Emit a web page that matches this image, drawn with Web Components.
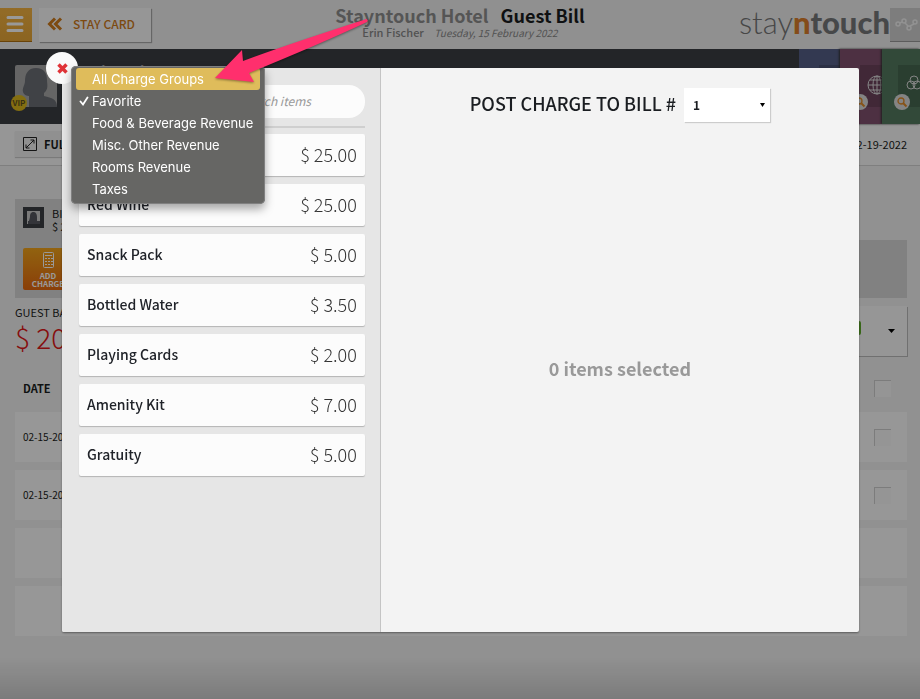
<!DOCTYPE html>
<html lang="en">
<head>
<meta charset="utf-8">
<title>Guest Bill</title>
<style>
    body {
        margin: 0;
        min-height: 100vh;
        overflow: hidden;
        background: #f2f2f2;
        color: #1a1d21;
        font-family: "Noto Sans CJK SC", "Noto Sans", sans-serif;
        font-size: 11px;
        line-height: 16px;
    }
</style>
</head>
<body>
<app-header hotel="Stayntouch Hotel" heading="Guest Bill" user="Erin Fischer" date="Tuesday, 15 February 2022"></app-header>
<guest-banner name="Erin Fischer"></guest-banner>
<guest-bill departure="02-19-2022"></guest-bill>
<charge-modal>
    <charge-item price="25.00"></charge-item>
    <charge-item price="25.00">Red Wine</charge-item>
    <charge-item price="5.00">Snack Pack</charge-item>
    <charge-item price="3.50">Bottled Water</charge-item>
    <charge-item price="2.00">Playing Cards</charge-item>
    <charge-item price="7.00">Amenity Kit</charge-item>
    <charge-item price="5.00">Gratuity</charge-item>
    <group-menu slot="menu"></group-menu>
</charge-modal>
<callout-arrow></callout-arrow>

<script>
class AppHeader extends HTMLElement {
    constructor() {
        super();
        this.attachShadow({ mode: 'open' });
    }

    connectedCallback() {
        this.shadowRoot.innerHTML = `
            <style>
                :host {
                    display: grid;
                    grid-template-columns: 1fr auto 1fr;
                    height: 49px;
                    background: #f0f0f0;
                }
                .left, .right {
                    display: flex;
                    align-items: center;
                }
                .left { gap: 7px; }
                .right { justify-content: flex-end; }
                button, a {
                    box-sizing: border-box;
                    height: 34px;
                    border: 0;
                    font: inherit;
                }
                .menu {
                    width: 32px;
                    padding: 0 0 0 6px;
                    background: linear-gradient(#f5b443, #e8a737);
                    border-bottom: 1px solid #b07010;
                }
                .back {
                    display: flex;
                    align-items: center;
                    gap: 10px;
                    padding: 0 16px 2px 8px;
                    background: #fafafa;
                    box-shadow: 1px 1px 1px #aaa;
                    color: #d07c1c;
                    font-size: 12px;
                    font-weight: 500;
                    text-decoration: none;
                }
                svg { display: block; }
                .title {
                    text-align: center;
                    padding-top: 5px;
                }
                h1 {
                    margin: 0;
                    font-size: 18px;
                    line-height: 20px;
                    font-weight: 700;
                }
                h1 span { color: #8e8e8e; margin-right: 8px; }
                p { margin: 0; line-height: 14px; color: #888; }
                p b { margin-right: 8px; font-weight: 500; }
                p em { font-size: 10px; }
                .logo {
                    padding-bottom: 6px;
                    font-family: Lato, sans-serif;
                    font-size: 31px;
                    line-height: 36px;
                    font-weight: 300;
                    color: #777;
                }
                .logo b { font-weight: 900; color: #77787a; }
                .logo i { font-style: normal; font-weight: 900; color: #dd7f2c; }
                .stats {
                    width: 30px;
                    padding: 0 0 0 5px;
                    overflow: hidden;
                    background: #d0d0d0;
                    border-bottom: 1px solid #999;
                }
            </style>
            <div class="left">
                <button class="menu" aria-label="Menu">
                    <svg width="18" height="18" viewBox="0 0 18 18" stroke="#fff" stroke-width="3" stroke-linecap="round"><path d="M2 2.500h14M2 9h14M2 15.500h14"/></svg>
                </button>
                <a class="back" href="#staycard">
                    <svg width="16" height="14" viewBox="0 0 16 14" fill="none" stroke="#d07c1c" stroke-width="3"><path d="M8 1.500L2.500 7L8 12.500M14 1.500L8.500 7L14 12.500"/></svg>
                    STAY CARD
                </a>
            </div>
            <div class="title">
                <h1><span>${this.getAttribute('hotel')}</span> ${this.getAttribute('heading')}</h1>
                <p><b>${this.getAttribute('user')}</b> <em>${this.getAttribute('date')}</em></p>
            </div>
            <div class="right">
                <div class="logo">stay<i>n</i><b>touch</b></div>
                <button class="stats" aria-label="Statistics">
                    <svg width="26" height="18" viewBox="0 0 26 18" fill="none" stroke="#f4f4f4" stroke-width="1.500"><circle cx="3" cy="9" r="2"/><circle cx="9" cy="6" r="2"/><circle cx="14" cy="13" r="2"/><circle cx="20" cy="7" r="2"/><path d="M5 8L7 7M10 8L13 11M15 11L19 9"/></svg>
                </button>
            </div>
        `;
    }
}

class GuestBanner extends HTMLElement {
    constructor() {
        super();
        this.attachShadow({ mode: 'open' });
    }

    connectedCallback() {
        const glass = '<svg class="glass" width="16" height="16" viewBox="0 0 16 16" fill="none"><circle cx="8" cy="8" r="8" fill="#ddd"/><circle cx="7" cy="7" r="3" stroke="#e08a28" stroke-width="1.300"/><path d="M9.300 9.300L12.500 12.500" stroke="#e08a28" stroke-width="2"/></svg>';
        this.shadowRoot.innerHTML = `
            <style>
                :host {
                    display: flex;
                    height: 75px;
                    background: #3b3e44;
                }
                .photo {
                    position: relative;
                    margin: 16px 0 0 15px;
                    width: 42px;
                    height: 42px;
                    background: #a8a8a8;
                    border-radius: 2px;
                }
                .vip {
                    position: absolute;
                    left: -4px;
                    bottom: -4px;
                    width: 16px;
                    height: 16px;
                    border-radius: 50%;
                    background: #dcb81c;
                    color: #5f5320;
                    text-align: center;
                    font-size: 8px;
                    line-height: 15px;
                    font-weight: 700;
                }
                h2 {
                    flex: 1;
                    margin: 11px 0 0 20px;
                    color: #fff;
                    font-size: 22px;
                    line-height: 28px;
                }
                .tile {
                    position: relative;
                    box-sizing: border-box;
                    width: 41px;
                    height: 75px;
                    padding: 16px 0 0 20px;
                    overflow: hidden;
                }
                .tile div {
                    height: 42px;
                    background: rgba(0, 0, 0, .15);
                }
                .tile .icon { display: block; padding-top: 10px; margin-left: 7px; }
                .tile .glass { position: absolute; left: 12px; top: 45px; }
                .blue { background: #565f87; }
                .purple { width: 42px; background: #81506e; box-shadow: -1px 0 2px #333; }
                .green { width: 38px; padding-left: 16px; background: #547b60; box-shadow: -1px 0 2px #333; }
            </style>
            <div class="photo">
                <svg width="42" height="42" viewBox="0 0 42 42" fill="#6c6f76"><path d="M21 3C13 3 10 9 10 16C10 20 7 23 8 27C9 31 14 31 14 31V42H42C42 34 37 33 29 31V28C34 24 32 19 32 15C32 8 29 3 21 3Z"/></svg>
                <span class="vip">VIP</span>
            </div>
            <h2>${this.getAttribute('name')}</h2>
            <div class="tile blue"><div></div></div>
            <div class="tile purple">
                <div><svg class="icon" width="20" height="20" viewBox="0 0 20 20" fill="none" stroke="#ddd" stroke-width="1"><circle cx="10" cy="10" r="9"/><ellipse cx="10" cy="10" rx="4" ry="9"/><path d="M10 1v18M1 10h18M3 5h14M3 15h14"/></svg></div>
                ${glass}
            </div>
            <div class="tile green">
                <div><svg class="icon" width="20" height="20" viewBox="0 0 20 20" fill="none" stroke="#ddd" stroke-width="1"><circle cx="9" cy="5" r="4"/><circle cx="6" cy="10" r="4"/><circle cx="12" cy="10" r="4"/></svg></div>
                ${glass}
            </div>
        `;
    }
}

class GuestBill extends HTMLElement {
    constructor() {
        super();
        this.attachShadow({ mode: 'open' });
    }

    connectedCallback() {
        const row = (date, box) => `<tr><td>${date}</td><td>${box ? '<input type="checkbox" aria-label="Select charge">' : ''}</td></tr>`;
        this.shadowRoot.innerHTML = `
            <style>
                :host { display: block; }
                .bar {
                    display: flex;
                    align-items: center;
                    justify-content: space-between;
                    height: 39px;
                    padding: 0 13px 2px 15px;
                    background: #fafafa;
                    border-bottom: 1px solid #d4d4d4;
                }
                button { border: 0; font: inherit; color: inherit; }
                .full {
                    display: flex;
                    align-items: center;
                    gap: 7px;
                    height: 26px;
                    padding: 0 8px;
                    background: #f0f0f0;
                    box-shadow: 0 1px 1px #ccc;
                    font-weight: 700;
                }
                .page { padding: 33px 13px 0 15px; }
                .tab {
                    box-sizing: border-box;
                    display: flex;
                    gap: 8px;
                    width: 160px;
                    height: 41px;
                    padding: 8px;
                    background: #d8d8d8;
                    line-height: 13px;
                }
                .tab svg { background: #3b3e44; }
                .bill {
                    height: 50px;
                    padding: 8px 8px 0;
                    background: #d8d8d8;
                }
                .add {
                    display: flex;
                    flex-direction: column;
                    align-items: center;
                    width: 50px;
                    height: 42px;
                    padding: 4px 0 0;
                    border-radius: 2px;
                    background: linear-gradient(#f3a51b, #e6690f);
                    color: #fff;
                    font-size: 8px;
                    line-height: 8px;
                    font-weight: 700;
                }
                .add svg { display: block; margin-bottom: 4px; }
                .summary {
                    display: flex;
                    justify-content: space-between;
                    height: 50px;
                    margin-top: 8px;
                    line-height: 13px;
                }
                .total {
                    display: block;
                    font-size: 28px;
                    line-height: 36px;
                    font-weight: 300;
                    color: #e01818;
                }
                .pay {
                    display: flex;
                    align-items: center;
                    justify-content: space-between;
                    width: 150px;
                    padding: 0 12px 0 90px;
                    background: #fafafa;
                    box-shadow: 1px 1px 0 #bbb;
                    box-sizing: border-box;
                }
                .pay i {
                    width: 14px;
                    height: 14px;
                    margin-bottom: 6px;
                    border-radius: 2px;
                    background: #5fae2a;
                }
                table {
                    width: 100%;
                    border-spacing: 0 8px;
                    margin-bottom: -8px;
                }
                th, td { height: 50px; padding: 0 8px; text-align: left; }
                th { height: 32px; padding-top: 8px; }
                td { background: #fcfcfc; font-size: 10px; }
                th:last-child, td:last-child { width: 17px; padding-right: 16px; }
                input {
                    appearance: none;
                    display: block;
                    width: 17px;
                    height: 17px;
                    margin: 0;
                    background: #f8f8f8;
                    border: solid #cfcfcf;
                    border-width: 1px 0 0 1px;
                }
            </style>
            <div class="bar">
                <button class="full">
                    <svg width="14" height="14" viewBox="0 0 14 14" fill="none" stroke="#222"><path d="M.5.5h13v13H.5zM3 11L11 3M7.500 3H11v3.500M3 7.500V11h3.500"/></svg>
                    FULL
                </button>
                <span>${this.getAttribute('departure')}</span>
            </div>
            <div class="page">
                <div class="tab">
                    <svg width="21" height="21" viewBox="0 0 21 21"><path fill="#ccc" d="M4 4h13v13H4z"/><path fill="#55585f" d="M10.500 5C7.500 5 7 7.500 7 10L6 14H5V17H17V14H14V10C14 7 13 5 10.500 5Z"/></svg>
                    <span>BILL<br>$ 200</span>
                </div>
                <div class="bill">
                    <button class="add">
                        <svg width="11" height="16" viewBox="0 0 11 16" fill="none" stroke="#fff"><rect x=".5" y=".5" width="10" height="15" rx="1"/><path d="M2 3.500h7"/><path stroke-dasharray="2 1" d="M2 6.500h8M2 9.500h8M2 12.500h8"/></svg>
                        <span>ADD<br>CHARGE</span>
                    </button>
                </div>
                <div class="summary">
                    <div>GUEST BALANCE<span class="total">$ 200</span></div>
                    <div class="pay"><i></i><svg width="7" height="4" viewBox="0 0 7 4"><path d="M0 0h7L3.500 4z"/></svg></div>
                </div>
                <table>
                    <thead><tr><th>DATE</th><th><input type="checkbox" aria-label="Select all"></th></tr></thead>
                    <tbody>${row('02-15-2022', true)}${row('02-15-2022', true)}${row('')}${row('')}</tbody>
                </table>
            </div>
        `;
    }
}

class ChargeItem extends HTMLElement {
    constructor() {
        super();
        this.attachShadow({ mode: 'open' });
    }

    connectedCallback() {
        this.shadowRoot.innerHTML = `
            <style>
                :host { display: block; }
                button {
                    display: flex;
                    align-items: center;
                    width: 100%;
                    height: 42px;
                    padding: 0 8px 2px;
                    border: 0;
                    border-radius: 2px;
                    background: #fcfcfc;
                    box-shadow: 0 1px 1px #b4b4b4;
                    color: #202329;
                    font: inherit;
                    font-size: 14px;
                    font-weight: 500;
                    line-height: 20px;
                }
                .price {
                    margin-left: auto;
                    font-size: 18px;
                    font-weight: 300;
                    color: #333;
                }
            </style>
            <button><slot></slot><span class="price">$ ${this.getAttribute('price')}</span></button>
        `;
    }
}

class GroupMenu extends HTMLElement {
    constructor() {
        super();
        this.attachShadow({ mode: 'open' });
    }

    connectedCallback() {
        const groups = ['All Charge Groups', 'Favorite', 'Food & Beverage Revenue', 'Misc. Other Revenue', 'Rooms Revenue', 'Taxes'];
        this.shadowRoot.innerHTML = `
            <style>
                :host {
                    display: block;
                    box-sizing: border-box;
                    width: 194px;
                    padding: 2px 5px 4px;
                    border-radius: 5px;
                    background: #666664;
                    box-shadow: inset 0 0 0 1px #808080, 0 5px 10px rgba(0, 0, 0, .35);
                    font-family: Inter, sans-serif;
                    font-size: 13px;
                }
                button {
                    display: flex;
                    align-items: center;
                    gap: 3px;
                    width: 100%;
                    height: 22px;
                    padding: 0 0 0 3px;
                    border: 0;
                    border-radius: 3px;
                    background: none;
                    color: #fff;
                    font: inherit;
                    line-height: 22px;
                    white-space: nowrap;
                }
                .active { background: #dfbc5b; }
            </style>
            ${groups.map((group, i) => `
                <button role="menuitemradio" aria-checked="${i === 1}" class="${i === 0 ? 'active' : ''}">
                    <svg width="10" height="10" viewBox="0 0 10 10" fill="none" stroke="#fff" stroke-width="1.800" stroke-linecap="round">${i === 1 ? '<path d="M1.500 5.500L4 8.500L8.500 1.500"/>' : ''}</svg>
                    ${group.replace('&', '&amp;')}
                </button>`).join('')}
        `;
    }
}

class ChargeModal extends HTMLElement {
    constructor() {
        super();
        this.attachShadow({ mode: 'open' });
    }

    connectedCallback() {
        this.shadowRoot.innerHTML = `
            <style>
                :host {
                    position: fixed;
                    inset: 0;
                    display: grid;
                    box-sizing: border-box;
                    padding: 68px 61px 67px 62px;
                    background: linear-gradient(transparent 94%, rgba(0, 0, 0, .15)), rgba(0, 0, 0, .4);
                }
                .dialog {
                    position: relative;
                    display: grid;
                    grid-template-columns: 2fr 3fr;
                    border-radius: 2px;
                    background: #f3f3f3;
                    box-shadow: 0 1px 2px rgba(0, 0, 0, .4);
                }
                .close {
                    position: absolute;
                    left: -16px;
                    top: -16px;
                    width: 32px;
                    height: 32px;
                    padding: 0 0 0 11px;
                    border: 0;
                    border-radius: 50%;
                    background: #fafafa;
                }
                .close svg { display: block; }
                ::slotted(group-menu) {
                    position: absolute;
                    left: 9px;
                    top: -2px;
                }
                .list {
                    padding: 17px 15px 0 17px;
                    border-radius: 2px 0 0 2px;
                    background: #e6e6e6;
                    border-right: 1px solid #c4c4c4;
                }
                .filter {
                    display: flex;
                    height: 33px;
                    padding-bottom: 8px;
                    margin-bottom: 6px;
                    border-bottom: 2px solid #cfcfcf;
                }
                .filter select {
                    width: 50%;
                    border: 0;
                    border-radius: 16px 0 0 16px;
                    background: #fcfcfc;
                    appearance: none;
                }
                .filter input {
                    width: 50%;
                    box-sizing: border-box;
                    border: 0;
                    border-radius: 0 16px 16px 0;
                    background: #fcfcfc;
                    padding: 0 0 1px 17px;
                    font: inherit;
                    font-size: 12px;
                    font-style: italic;
                }
                .filter input::placeholder { color: #999; }
                .items { display: grid; gap: 8px; }
                .charges {
                    display: flex;
                    flex-direction: column;
                    align-items: center;
                    padding-top: 20px;
                }
                .bill {
                    display: flex;
                    gap: 8px;
                    font-size: 18px;
                    line-height: 30px;
                    font-weight: 500;
                }
                .number {
                    display: grid;
                    grid-template-columns: 86px;
                    align-items: center;
                }
                .number select, .number svg { grid-area: 1 / 1; }
                .number select {
                    height: 34px;
                    padding: 0 9px;
                    border: 0;
                    background: #fff;
                    box-shadow: 1px 1px 1px #ccc;
                    appearance: none;
                    color: inherit;
                    font: inherit;
                    font-size: 12px;
                    font-weight: 700;
                }
                .number svg { justify-self: end; margin-right: 5px; pointer-events: none; }
                .empty {
                    display: grid;
                    place-items: center;
                    flex: 1;
                    padding-bottom: 18px;
                    color: #999;
                    font-size: 18px;
                    font-weight: 700;
                }
            </style>
            <div class="dialog" role="dialog" aria-label="Post charge">
                <section class="list">
                    <div class="filter">
                        <select aria-label="Charge group"></select>
                        <input type="search" aria-label="Search items" placeholder="Search items">
                    </div>
                    <div class="items"><slot></slot></div>
                </section>
                <section class="charges">
                    <div class="bill">
                        <label for="bill">POST CHARGE TO BILL #</label>
                        <span class="number">
                            <select id="bill"><option>1</option></select>
                            <svg width="5" height="4" viewBox="0 0 5 4"><path d="M0 0h5L2.500 4z"/></svg>
                        </span>
                    </div>
                    <div class="empty">0 items selected</div>
                </section>
                <button class="close" aria-label="Close">
                    <svg width="11" height="11" viewBox="0 0 11 11" stroke="#e03338" stroke-width="3.500"><path d="M1.500 1.500L9.500 9.500M9.500 1.500L1.500 9.500"/></svg>
                </button>
                <slot name="menu"></slot>
            </div>
        `;
    }
}

class CalloutArrow extends HTMLElement {
    constructor() {
        super();
        this.attachShadow({ mode: 'open' });
    }

    connectedCallback() {
        this.shadowRoot.innerHTML = `
            <style>
                :host {
                    position: fixed;
                    left: 210px;
                    top: 14px;
                    pointer-events: none;
                    filter: drop-shadow(0 1px 1px rgba(0, 0, 0, .4));
                }
                svg { display: block; }
            </style>
            <svg width="160" height="72" viewBox="0 0 160 72" fill="#ff2f6d"><path d="M5 64L32 36L33 47Q70 33 155 5.500A1.500 1.500 0 0 1 157 8Q110 30 39 59L44 68Z"/></svg>
        `;
    }
}

customElements.define('app-header', AppHeader);
customElements.define('guest-banner', GuestBanner);
customElements.define('guest-bill', GuestBill);
customElements.define('charge-item', ChargeItem);
customElements.define('group-menu', GroupMenu);
customElements.define('charge-modal', ChargeModal);
customElements.define('callout-arrow', CalloutArrow);
</script>
</body>
</html>
